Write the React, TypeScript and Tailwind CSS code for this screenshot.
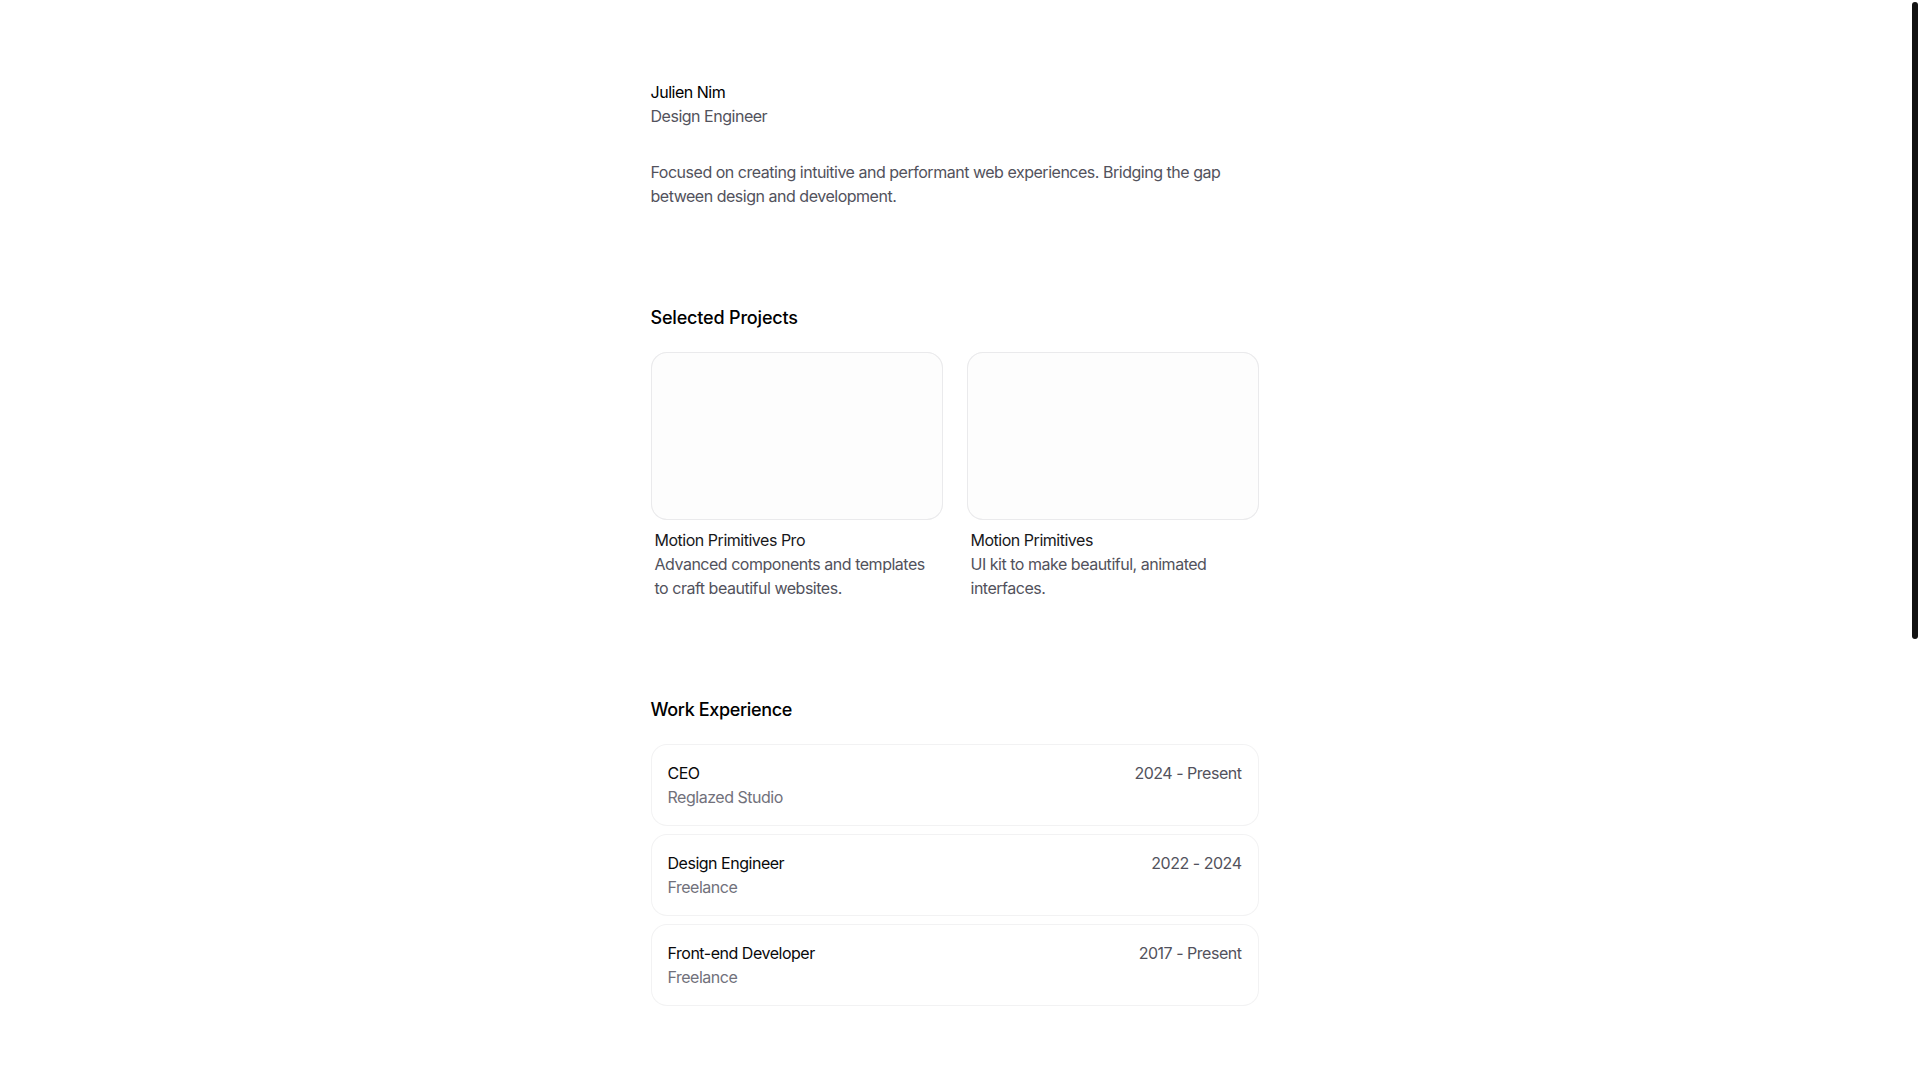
const PROJECTS = [
  {
    name: "Motion Primitives Pro",
    description: "Advanced components and templates to craft beautiful websites.",
  },
  {
    name: "Motion Primitives",
    description: "UI kit to make beautiful, animated interfaces.",
  },
];

const WORK_EXPERIENCE = [
  { title: "CEO", company: "Reglazed Studio", start: "2024", end: "Present" },
  { title: "Design Engineer", company: "Freelance", start: "2022", end: "2024" },
  { title: "Front-end Developer", company: "Freelance", start: "2017", end: "Present" },
];

export default function App() {
  return (
    <div className="flex min-h-screen w-full flex-col bg-white pr-[11px] font-['Inter','Liberation_Sans',sans-serif] text-base tracking-[-0.03em] text-black antialiased">
      <div className="relative mx-auto w-full max-w-screen-sm flex-1 px-4 pt-20">
        {/* Header */}
        <header className="mb-8 flex items-center justify-between">
          <div>
            <a href="#" className="font-normal text-black">
              Julien Nim
            </a>
            <p className="text-zinc-600">Design Engineer</p>
          </div>
        </header>

        <main className="space-y-24">
          <section>
            <p className="text-zinc-600">
              Focused on creating intuitive and performant web experiences.
              Bridging the gap between design and development.
            </p>
          </section>

          {/* Projects */}
          <section>
            <h3 className="mb-5 text-lg font-medium tracking-[-0.01em]">Selected Projects</h3>
            <div className="grid grid-cols-2 gap-6">
              {PROJECTS.map((project) => (
                <div key={project.name} className="space-y-2">
                  <div className="relative rounded-2xl bg-zinc-50/40 p-1 shadow-[inset_0_0_0_1px_rgba(0,0,0,0.05)] ring-1 ring-inset ring-zinc-200/50">
                    <div className="aspect-video w-full rounded-xl" />
                  </div>
                  <div className="px-1">
                    <a href="#" className="relative inline-block font-normal text-zinc-900">
                      {project.name}
                    </a>
                    <p className="text-base text-zinc-600">{project.description}</p>
                  </div>
                </div>
              ))}
            </div>
          </section>

          {/* Work */}
          <section>
            <h3 className="mb-5 text-lg font-medium tracking-[-0.02em]">Work Experience</h3>
            <div className="flex flex-col space-y-2">
              {WORK_EXPERIENCE.map((job) => (
                <a
                  key={job.title}
                  href="#"
                  className="relative overflow-hidden rounded-2xl bg-zinc-300/30 p-[1px]"
                >
                  <div className="relative h-full w-full rounded-[15px] bg-white p-4">
                    <div className="relative flex w-full flex-row justify-between">
                      <div>
                        <h4 className="font-normal text-zinc-950">{job.title}</h4>
                        <p className="text-zinc-500">{job.company}</p>
                      </div>
                      <p className="text-zinc-600">
                        {job.start} - {job.end}
                      </p>
                    </div>
                  </div>
                </a>
              ))}
            </div>
          </section>
        </main>
      </div>

      {/* scrollbar thumb */}
      <div className="fixed right-[2px] top-[2px] h-[637px] w-[6px] rounded-full bg-[#121212]" />
    </div>
  );
}
